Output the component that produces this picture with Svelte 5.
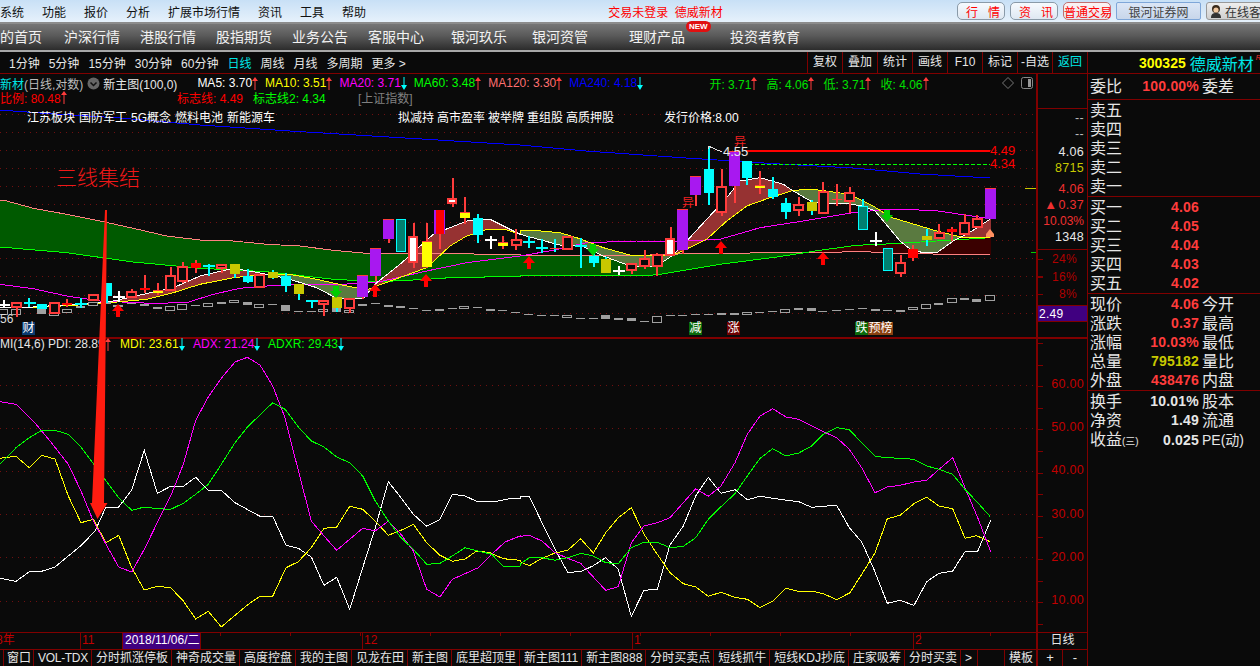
<script>
  // coordinates were read off zoomed crops, so each block has its own origin
  const up4 = (p) => p.map(([x, y]) => [x / 3, 170 + y / 3]);
  const up5 = (p) => p.map(([x, y]) => [520 + x / 3, 130 + y / 3]);
  const lo8 = (p) => p.map(([x, y]) => [x / 3, 340 + y / 3]);
  const lo9 = (p) => p.map(([x, y]) => [520 + x / 3, 340 + y / 3]);
  const pts = (p) => p.map(([x, y]) => `${x.toFixed(1)},${y.toFixed(1)}`).join(' ');

  const ma5 = [
    ...up4([[0,410],[100,408],[250,398],[340,390],[430,370],[520,350],[600,315],[700,292],[760,302],[860,322],[950,350],[1010,382],[1090,382],[1130,335],[1200,280],[1300,190],[1400,150],[1470,145],[1560,190]]),
    ...up5([[0,310],[130,345],[180,343],[250,375],[330,405],[410,405],[460,372],[500,330],[620,200],[660,150],[720,140],[790,160],[820,180],[880,215],[980,218],[1030,225],[1065,240],[1140,330],[1180,362],[1250,365],[1300,330],[1340,310],[1410,265]])
  ];
  const ma10 = [
    ...up4([[0,411],[100,410],[250,401],[340,394],[440,385],[520,365],[600,340],[700,320],[800,310],[880,312],[950,325],[1040,345],[1100,357],[1130,345],[1280,290],[1350,225],[1400,195],[1460,175],[1520,177],[1560,190]]),
    ...up5([[0,298],[40,298],[120,305],[170,320],[250,350],[330,372],[410,375],[470,368],[560,325],[620,270],[680,225],[750,200],[820,178],[880,175],[990,190],[1060,225],[1110,258],[1250,300],[1330,320],[1410,320]])
  ];
  const ma20 = [
    ...up4([[0,340],[100,353],[200,375],[300,390],[450,397],[560,395],[640,370],[720,352],[800,345],[880,340],[1000,342],[1140,332],[1280,300],[1400,275],[1560,255]]),
    ...up5([[100,358],[200,335],[350,330],[500,330],[600,325],[720,290],[850,270],[1000,245],[1100,235],[1240,238],[1410,263]])
  ];
  const ma60 = [
    ...up4([[0,228],[200,245],[400,273],[600,292],[800,302],[1000,325],[1140,332],[1280,325],[1350,320],[1560,316]]),
    ...up5([[0,435],[390,433],[420,430],[600,400],[770,378],[900,358],[1010,343],[1120,338],[1250,330],[1410,320]])
  ];
  const ma120 = [
    ...up4([[0,88],[20,90],[100,112],[200,130],[300,150],[400,172],[500,195],[600,207],[700,210],[800,220],[900,225],[1000,238],[1100,247],[1560,250]]),
    ...up5([[0,372],[390,372],[500,368],[1050,362],[1060,365],[1280,370],[1410,371]])
  ];
  const ma240 = [[0,109],[40,112],[120,117],[200,124],[290,130],[520,144],[586,150],[686,157],[780,163],[853,167],[920,173],[990,177]];

  function yAt(line, x) {
    for (let i = 1; i < line.length; i++) {
      if (x <= line[i][0]) {
        const [x0, y0] = line[i - 1], [x1, y1] = line[i];
        return x1 === x0 ? y1 : y0 + (y1 - y0) * (x - x0) / (x1 - x0);
      }
    }
    return line[line.length - 1][1];
  }

  // the area between two averages, one colour when a is above b and another when below
  function band(a, b, end) {
    let above = '', below = '';
    for (let x = 0; x <= end; x++) {
      const y1 = yAt(a, x), y2 = yAt(b, x);
      const seg = `M${x + 0.5} ${y1.toFixed(1)}V${y2.toFixed(1)}`;
      if (y1 < y2) above += seg; else below += seg;
    }
    return { above, below };
  }
  const fast = band(ma5, ma10, 990);
  const slow = band(ma120, ma60, 990);

  const cA = (c) => ({ x: c[0] / 3, wt: 170 + c[1] / 3, wb: 170 + c[2] / 3, bt: 170 + c[3] / 3, bb: 170 + c[4] / 3, k: c[5] });
  const cB = (c) => ({ x: 520 + c[0] / 3, wt: 130 + c[1] / 3, wb: 130 + c[2] / 3, bt: 130 + c[3] / 3, bb: 130 + c[4] / 3, k: c[5] });
  const bars = [
    ...[
      [10,388,412,399,403,'x'],[48,395,437,395,408,'r'],[86,382,408,394,398,'X'],[125,400,414,400,414,'c'],[163,395,425,397,425,'r'],
      [200,385,408,395,403,'f'],[240,382,410,396,400,'X'],[279,372,387,372,387,'r'],[320,336,395,336,376,'c'],[355,360,392,376,380,'x'],
      [394,355,380,362,377,'r'],[432,312,365,352,358,'f'],[471,335,372,356,366,'y'],[510,288,360,314,358,'r'],[547,273,335,288,330,'r'],
      [586,268,305,275,290,'f'],[625,280,315,283,286,'X'],[663,278,305,283,290,'r'],[703,280,320,280,308,'o'],[741,295,335,314,332,'c'],
      [778,313,350,313,347,'r'],[817,297,323,304,320,'o'],[857,305,362,315,345,'c'],[895,340,388,340,368,'o'],[934,388,412,388,391,'X'],
      [970,390,435,390,400,'r'],[1009,378,422,378,410,'o'],[1047,384,425,384,412,'r'],[1087,312,385,312,378,'p'],[1126,230,330,230,315,'p'],
      [1165,143,215,143,203,'p'],[1202,145,240,145,240,'t'],[1240,155,292,197,272,'w'],[1279,155,290,210,288,'y'],[1318,118,233,118,190,'q'],
      [1356,22,107,83,95,'w'],[1392,78,158,122,140,'y'],[1432,130,215,140,193,'c'],[1470,195,233,203,207,'x'],[1508,195,235,212,225,'y'],[1547,175,237,207,222,'r']
    ].map(cA),
    ...[
      [25,315,352,331,335,'X'],[64,325,365,348,352,'X'],[102,325,362,350,355,'z'],[141,317,355,317,355,'r'],[180,322,410,343,347,'X'],
      [220,365,407,375,395,'c'],[257,378,425,385,425,'o'],[295,405,433,418,422,'x'],[333,400,430,400,417,'r'],[372,358,413,385,405,'r'],
      [410,365,435,372,405,'r'],[450,288,375,323,372,'w'],[487,233,368,233,358,'p'],[526,135,225,135,192,'p'],[565,45,222,114,185,'c'],
      [603,113,255,167,242,'r'],[643,60,215,60,165,'p'],[680,90,162,90,142,'c'],[718,120,190,161,171,'y'],[757,138,205,174,198,'c'],
      [796,200,264,216,243,'c'],[834,198,255,221,236,'r'],[873,208,252,213,240,'o'],[908,153,248,183,247,'r'],[948,160,225,203,207,'y'],
      [987,168,245,187,210,'r'],[1027,205,297,225,295,'t'],[1065,303,345,328,332,'x'],[1102,352,420,352,418,'t'],[1140,372,437,397,425,'r'],
      [1178,342,390,353,381,'f'],[1218,295,345,315,327,'o'],[1256,278,325,305,320,'r'],[1295,288,330,295,302,'f'],[1332,248,313,275,310,'r'],
      [1370,252,290,265,287,'r'],[1410,170,263,170,263,'p']
    ].map(cB)
  ];

  const WICK = { x: '#fff', X: '#0ff', c: '#0ff', o: '#0ff', t: '#0ff', z: '#0ff' };
  const wickColor = (k) => WICK[k] || '#ff3c3c';

  const volA = [[10,415,430,1],[48,415,430,1],[125,412,428,0],[163,424,432,1],[200,415,423,1],[240,405,411,0],[279,393,404,1],[320,393,398,0],[355,403,407,1],[394,397,399,0],[432,398,404,0],[471,408,413,0],[510,406,418,1],[547,401,415,1],[586,402,404,0],[625,397,407,1],[663,393,398,0],[703,388,395,1],[741,393,401,0],[778,400,409,1],[817,400,402,0],[857,402,419,0],[895,420,423,0],[934,419,421,0],[970,415,422,1],[1009,411,422,0],[1047,418,424,1],[1087,400,404,0],[1126,397,400,0],[1165,403,407,0],[1202,406,410,0],[1240,411,413,0],[1279,417,419,0],[1318,414,419,0],[1356,412,413,0],[1392,406,412,1],[1432,407,412,0],[1470,414,419,0],[1508,417,419,0],[1547,423,427,0]];
  const volB = [[25,549,552,0],[64,553,556,0],[102,552,555,0],[141,553,559,1],[180,560,562,0],[220,560,562,0],[257,553,564,0],[295,561,566,0],[333,561,570,0],[372,570,572,0],[410,556,574,1],[450,552,554,0],[487,552,554,0],[526,548,551,0],[565,548,551,0],[603,546,551,0],[643,546,551,0],[680,544,551,1],[718,544,545,0],[757,540,543,0],[796,534,544,1],[834,532,536,0],[873,532,539,0],[908,540,542,0],[948,538,541,0],[987,534,537,0],[1027,531,534,0],[1065,534,539,0],[1102,537,540,0],[1140,537,542,0],[1178,529,536,1],[1218,520,532,1],[1256,516,521,0],[1295,502,514,1],[1332,502,506,0],[1370,504,512,0],[1410,493,508,1]];
  const volume = [
    ...volA.map((v) => ({ x: v[0] / 3, t: 170 + v[1] / 3, b: 170 + v[2] / 3, hollow: v[3] })),
    ...volB.map((v) => ({ x: 520 + v[0] / 3, t: 130 + v[1] / 3, b: 130 + v[2] / 3, hollow: v[3] }))
  ];

  const upArrows = [[118,303],[375,283],[426,273],[529,255],[721,240],[823,251]];
  const downArrows = [[336,286],[593,244],[887,210]];

  const lower = [
    { color: '#fff', line: [
      ...lo8([[0,712],[48,721],[90,691],[125,691],[165,678],[205,645],[245,612],[285,570],[318,498],[356,498],[395,447],[433,328],[472,457],[512,436],[550,436],[587,409],[625,448],[664,448],[705,485],[745,507],[780,526],[818,526],[858,613],[895,622],[934,648],[972,733],[1010,709],[1049,805],[1088,680],[1126,560],[1165,422],[1203,470],[1240,520],[1280,556],[1320,535],[1357,460],[1395,465],[1430,481],[1490,481],[1530,473],[1560,472]]),
      ...lo9([[0,468],[28,466],[66,545],[105,625],[143,694],[182,692],[218,675],[257,650],[295,685],[334,826],[372,748],[412,745],[450,612],[490,555],[527,465],[565,409],[603,457],[645,446],[682,476],[720,466],[760,472],[800,478],[836,482],[875,499],[910,496],[950,493],[988,560],[1025,603],[1060,680],[1102,787],[1140,778],[1182,793],[1220,722],[1257,697],[1298,690],[1335,632],[1373,631],[1412,537]])
    ] },
    { color: '#ff0', line: [
      ...lo8([[0,352],[48,346],[88,380],[125,343],[165,354],[205,465],[243,545],[280,535],[318,605],[356,583],[395,680],[433,747],[472,736],[512,740],[550,780],[587,834],[625,811],[664,858],[705,823],[745,790],[780,766],[818,766],[858,680],[895,662],[934,620],[972,562],[1010,558],[1049,496],[1088,505],[1126,540],[1165,583],[1203,568],[1240,550],[1280,605],[1320,643],[1357,661],[1395,654],[1430,630],[1470,635],[1510,653],[1560,658]]),
      ...lo9([[0,662],[28,674],[66,652],[105,636],[143,628],[182,593],[220,636],[257,575],[295,530],[334,500],[372,580],[412,640],[450,695],[490,728],[527,738],[565,766],[603,754],[645,769],[682,775],[720,800],[760,780],[798,742],[836,751],[880,751],[910,758],[950,776],[990,755],[1025,700],[1065,636],[1102,533],[1140,523],[1182,488],[1220,469],[1257,495],[1298,503],[1335,592],[1370,584],[1410,602]])
    ] },
    { color: '#f0f', line: [
      ...lo8([[0,182],[48,190],[100,240],[150,300],[205,370],[243,450],[280,540],[318,610],[356,678],[395,693],[433,625],[472,545],[512,465],[550,370],[587,238],[625,168],[664,112],[705,63],[742,49],[780,72],[818,135],[855,230],[880,330],[934,540],[972,585],[1010,628],[1049,595],[1088,562],[1126,570],[1165,540],[1203,580],[1240,630],[1280,745],[1320,768],[1357,715],[1395,698],[1435,680],[1475,640],[1515,603],[1560,585]]),
      ...lo9([[0,586],[28,583],[66,600],[105,635],[143,652],[182,667],[220,708],[257,748],[295,737],[334,605],[372,555],[412,545],[450,530],[490,485],[527,443],[565,466],[603,435],[645,365],[682,280],[720,225],[758,203],[798,228],[836,235],[875,255],[910,272],[950,290],[988,325],[1025,380],[1065,455],[1102,438],[1140,433],[1182,423],[1220,418],[1257,385],[1298,350],[1335,440],[1373,530],[1412,632]])
    ] },
    { color: '#0f0', line: [
      ...lo8([[0,370],[48,320],[88,290],[125,268],[165,268],[205,280],[243,318],[285,375],[318,420],[356,470],[395,508],[433,498],[472,503],[512,505],[550,487],[587,460],[625,430],[664,370],[705,305],[745,255],[780,222],[818,185],[855,205],[895,258],[934,300],[972,318],[1010,348],[1049,365],[1088,405],[1126,480],[1165,540],[1203,590],[1240,625],[1280,670],[1320,667],[1357,645],[1395,620],[1435,630],[1475,640],[1510,676],[1560,675]]),
      ...lo9([[0,670],[28,650],[66,650],[105,658],[143,650],[182,637],[220,645],[257,665],[295,668],[334,620],[372,604],[412,604],[450,620],[490,616],[527,590],[565,535],[603,497],[645,458],[682,405],[720,352],[758,323],[798,345],[836,336],[875,315],[910,280],[950,260],[988,266],[1025,305],[1065,346],[1102,350],[1140,352],[1182,355],[1220,375],[1257,385],[1298,400],[1335,445],[1373,485],[1410,526]])
    ] }
  ];

  const upperGrid = Array.from({ length: 12 }, (_, i) => 113 + i * 18.1);
  const lowerGrid = [384, 427, 470, 513, 556, 600];

  const menu = ['系统', '功能', '报价', '分析', '扩展市场行情', '资讯', '工具', '帮助'];
  const periods = ['1分钟', '5分钟', '15分钟', '30分钟', '60分钟', '日线', '周线', '月线', '多周期', '更多 >'];
  const actions = ['复权', '叠加', '统计', '画线', 'F10', '标记', '-自选', '返回'];
  const mas = [
    ['MA5: 3.70', '#fff', 'up'], ['MA10: 3.51', '#ff0', 'up'], ['MA20: 3.71', '#f0f', 'down'],
    ['MA60: 3.48', '#0f0', 'up'], ['MA120: 3.30', '#ff7070', 'up'], ['MA240: 4.18', '#0000ff', 'down']
  ];
  const ohlc = ['开: 3.71', '高: 4.06', '低: 3.71', '收: 4.06'];
  const tabs = ['窗口', 'VOL-TDX', '分时抓涨停板', '神奇成交量', '高度控盘', '我的主图', '见龙在田', '新主图', '底里超顶里', '新主图111', '新主图888', '分时买卖点', '短线抓牛', '短线KDJ抄底', '庄家吸筹', '分时买卖', '>'];
  const ticks = [
    { w: 80, label: '8年' }, { w: 42, label: '11' }, { w: 78, label: '2018/11/06/二', on: true },
    { w: 162, label: '' }, { w: 270, label: '12' }, { w: 281, label: '1' }, { w: 123, label: '2' }
  ];

  const sells = ['卖五', '卖四', '卖三', '卖二', '卖一'];
  const buys = [['买一', '4.06'], ['买二', '4.05'], ['买三', '4.04'], ['买四', '4.03'], ['买五', '4.02']];
  const quotes = [
    ['现价', '4.06', 'red', '今开'], ['涨跌', '0.37', 'red', '最高'], ['涨幅', '10.03%', 'red', '最低'],
    ['总量', '795182', 'olive', '量比'], ['外盘', '438476', 'red', '内盘']
  ];
</script>

{#snippet arrow(dir)}
  <svg class="tick-arrow" width="6" height="13" viewBox="0 0 6 13">
    {#if dir === 'up'}
      <path d="M3 0L6 4H3.500V13H2.500V4H0z" fill="#ff3c3c" />
    {:else}
      <path d="M3 13L0 8H2.500V0H3.500V8H6z" fill="#0ff" />
    {/if}
  </svg>
{/snippet}

<div class="app">
  <header class="menu">
    {#each menu as item}<span>{item}</span>{/each}
    <span class="status">交易未登录&nbsp;&nbsp;德威新材</span>
    <div class="quick">
      <button class="pill spaced">行情</button>
      <button class="pill spaced">资讯</button>
      <button class="pill trade">普通交易</button>
      <button class="site">银河证券网</button>
      <button class="service">
        <svg width="14" height="14" viewBox="0 0 14 14">
          <circle cx="7" cy="5" r="4" fill="#3a2a1a" /><circle cx="7" cy="6" r="2.6" fill="#f0c8a0" />
          <path d="M2 14c0-4 2-5 5-5s5 1 5 5z" fill="#333" />
        </svg>
        在线客服
      </button>
    </div>
  </header>

  <nav class="nav">
    <span class="cut">我的首页</span>
    <span>沪深行情</span>
    <span>港股行情</span>
    <span>股指期货</span>
    <span>业务公告</span>
    <span>客服中心</span>
    <span class="wide">银河玖乐</span>
    <span class="wide next">银河资管</span>
    <span class="far">理财产品<b class="new">NEW</b></span>
    <span class="farther">投资者教育</span>
  </nav>

  <div class="body">
    <section class="left">
      <div class="toolbar">
        <div class="periods">
          {#each periods as p}<span class:active={p === '日线'}>{p}</span>{/each}
        </div>
        <div class="actions">
          {#each actions as a}<span class:active={a === '返回'}>{a}</span>{/each}
        </div>
      </div>

      <div class="main">
        <div class="canvas">
          <svg class="plot" width="1036" height="558" viewBox="0 73 1036 558" shape-rendering="crispEdges">
            {#each upperGrid as y}<line x1="0" x2="1036" y1={y} y2={y} class="grid" />{/each}
            {#each lowerGrid as y}<line x1="0" x2="1036" y1={y} y2={y} class="grid" />{/each}

            <path d={slow.above} stroke="#005a00" />
            <path d={slow.below} stroke="#3a0000" />
            <path d={fast.above} stroke="#963232" />
            <path d={fast.below} stroke="#5a7a40" />

            <polyline points={pts(ma240)} class="ln" stroke="#0000ff" />
            <polyline points={pts(ma120)} class="ln" stroke="#ff8080" />
            <polyline points={pts(ma60)} class="ln" stroke="#00ff00" />
            <polyline points={pts(ma20)} class="ln" stroke="#ff00ff" />
            <polyline points={pts(ma10)} class="ln" stroke="#ffff00" />
            <polyline points={pts(ma5)} class="ln" stroke="#ffffff" />

            <line x1="746" x2="990" y1="150" y2="150" stroke="#f00" stroke-width="2" />
            <line x1="743" x2="990" y1="163.500" y2="163.500" stroke="#0f0" stroke-dasharray="4 2" />
            <line x1="1025" x2="1036" y1="187.500" y2="187.500" stroke="#c8c800" />
            <line x1="1031" x2="1036" y1="251.500" y2="251.500" stroke="#0c0" />

            {#each volume as v}
              {#if v.hollow}
                <rect x={v.x - 4.500} y={v.t} width="9" height={v.b - v.t} fill="#0a0a0a" stroke="#a0a0a0" />
              {:else}
                <rect x={v.x - 4.500} y={v.t} width="9" height={Math.max(1, v.b - v.t)} fill="#a0a0a0" />
              {/if}
            {/each}

            {#each bars as c}
              <rect x={c.x - 0.500} y={c.wt} width="2" height={c.wb - c.wt} fill={wickColor(c.k)} />
              {#if c.k === 'r'}
                <rect x={c.x - 4} y={c.bt} width="9" height={c.bb - c.bt} fill="#0a0a0a" stroke="#ff3c3c" stroke-width="2" />
              {:else if c.k === 'f'}
                <rect x={c.x - 4.500} y={c.bt} width="10" height={c.bb - c.bt} fill="#f00" />
              {:else if c.k === 'c'}
                <rect x={c.x - 4.500} y={c.bt} width="10" height={c.bb - c.bt} fill="#0ff" />
              {:else if c.k === 'o'}
                <rect x={c.x - 4.500} y={c.bt} width="10" height={c.bb - c.bt} fill="#c8c800" />
              {:else if c.k === 'y' || c.k === 'z'}
                <rect x={c.x - 4.500} y={c.bt} width="10" height={c.bb - c.bt} fill="#ff0" />
                <rect x={c.x - 4.500} y={c.bt} width="10" height="1" fill="#ff3c3c" />
              {:else if c.k === 'w'}
                <rect x={c.x - 4} y={c.bt} width="8" height={c.bb - c.bt} fill="#fff" stroke="#ff3c3c" stroke-width="2" />
              {:else if c.k === 'p'}
                <rect x={c.x - 5} y={c.bt} width="11" height={c.bb - c.bt} fill="#a818f0" />
                <rect x={c.x - 5} y={c.bt} width="11" height="1" fill="#ff3c3c" />
              {:else if c.k === 'q'}
                <rect x={c.x - 5} y={c.bt} width="11" height={c.bb - c.bt} fill="#a818f0" />
                <rect x={c.x - 3} y={c.bt} width="8" height={c.bb - c.bt} fill="#f00" />
              {:else if c.k === 't'}
                <rect x={c.x - 4} y={c.bt} width="9" height={c.bb - c.bt} fill="#008070" stroke="#0ff" />
              {:else}
                <rect x={c.x - 5} y={c.bt} width="12" height="2" fill={wickColor(c.k)} />
              {/if}
            {/each}

            {#each upArrows as [x, y]}
              <path d="M{x} {y}l6 7h-4v6h-4v-6h-4z" fill="#f00" shape-rendering="auto" />
            {/each}
            {#each downArrows as [x, y]}
              <path d="M{x} {y + 11}l6 -7h-3v-5h-6v5h-3z" fill="#0c0" shape-rendering="auto" />
            {/each}
            <path d="M990 228l4 5h-8z" fill="#ff9060" shape-rendering="auto" />
            <path d="M990 233h-4v3h8v-3z" fill="#ff9060" />

            <path d="M708 148v-3h3M708 148v-3l14 6" fill="none" stroke="#ddd" />
            <text x="723" y="155" class="price-white">4.55</text>
            <text x="990" y="154" class="price-red">4.49</text>
            <text x="990" y="167" class="price-red">4.34</text>
            <text x="682" y="206" class="sig">异</text>
            <text x="734" y="145" class="sig">异</text>
            <text x="56" y="184" class="note">三线集结</text>
            <text x="0" y="322" class="vol-tag">56</text>

            <line x1="0" x2="1036" y1="336.500" y2="336.500" stroke="#800000" stroke-width="2" />

            {#each lower as s}
              <polyline points={pts(s.line)} class="ln" stroke={s.color} />
            {/each}
          </svg>

          <div class="legend">
            <div class="row">
              <span class="title"><i>新材</i>(日线,对数)</span>
              <svg class="chev" width="13" height="13" viewBox="0 0 13 13">
                <circle cx="6.500" cy="6.500" r="6" fill="#666" /><path d="M3.500 5.500l3 3 3-3" fill="none" stroke="#111" stroke-width="1.500" />
              </svg>
              <span class="tpl">新主图(100,0)</span>
              <div class="mas">
                {#each mas as [text, color, dir]}
                  <span class="val" style="color: {color}">{text}{@render arrow(dir)}</span>
                {/each}
              </div>
              <div class="ohlc">
                {#each ohlc as o}<span class="val">{o}{@render arrow('up')}</span>{/each}
              </div>
              <div class="tools">
                <svg width="12" height="12" viewBox="0 0 12 12"><path d="M6 .5L11.500 6 6 11.500.5 6z" fill="none" stroke="#777" /></svg>
                <svg width="12" height="12" viewBox="0 0 12 12"><rect x=".5" y=".5" width="11" height="11" rx="2" fill="none" stroke="#888" /><rect x="7" y="2" width="3" height="8" fill="#999" /></svg>
              </div>
            </div>
            <div class="row second">
              <span class="val ratio">比例: 80.48{@render arrow('up')}</span>
              <span class="val sign">标志线: 4.49</span>
              <span class="val sign2">标志线2: 4.34</span>
              <span class="index">[上证指数]</span>
            </div>
            <div class="row tags">
              <div class="group first"><span>江苏板块</span><span>国防军工</span><span>5G概念</span><span>燃料电池</span><span>新能源车</span></div>
              <div class="group mid"><span>拟减持</span><span>高市盈率</span><span>被举牌</span><span>重组股</span><span>高质押股</span></div>
              <span class="issue">发行价格:8.00</span>
            </div>
            <div class="events">
              <span class="ev fin">财</span>
              <span class="ev cut1">减</span>
              <span class="ev rise">涨</span>
              <span class="ev fall">跌</span>
              <span class="ev rank">预榜</span>
            </div>
            <div class="row adx">
              <span class="val mi">MI(14,6)</span>
              <span class="val">PDI: 28.89{@render arrow('up')}</span>
              <span class="val mdi">MDI: 23.61{@render arrow('down')}</span>
              <span class="val adx-v">ADX: 21.24{@render arrow('down')}</span>
              <span class="val adxr">ADXR: 29.43{@render arrow('down')}</span>
            </div>
          </div>

          <svg class="big-arrow" width="120" height="320" viewBox="0 205 120 320">
            <path d="M105 209L107 209 104 502 107.500 502 97.500 518 90 502 92 502z" fill="#ff1c10" />
          </svg>
        </div>

        <aside class="axis">
          <div class="axis-head"></div>
          <div class="axis-upper">
            <span class="gray">--</span>
            <span class="gray">--</span>
            <span class="w lift">4.06</span>
            <span class="yl lift">8715</span>
            <span class="rd gap">4.06</span>
            <span class="rd"><em>▲</em>0.37</span>
            <span class="rd small">10.03%</span>
            <span class="w">1348</span>
          </div>
          <div class="axis-pct">
            <span>24%</span><span>16%</span><span>8%</span>
          </div>
          <div class="cost">2.49</div>
          <div class="axis-lower">
            {#each ['60.00', '50.00', '40.00', '30.00', '20.00', '10.00'] as v}<span>{v}</span>{/each}
          </div>
        </aside>
      </div>

      <div class="timeline">
        <div class="dates">
          {#each ticks as t}
            <span class="seg" class:on={t.on} style="width: {t.w}px">{t.label}</span>
          {/each}
        </div>
        <div class="period-cell">日线</div>
      </div>

      <div class="tabs">
        <div class="tab-list">
          {#each tabs as t}<span>{t}</span>{/each}
          <span class="tpl-tab">模板</span>
        </div>
        <div class="zoom"><span>+</span><span>-</span></div>
      </div>
    </section>

    <aside class="panel">
      <div class="stock"><b>300325</b><span>德威新材</span><i>R</i></div>
      <div class="line ratio-row">
        <span class="lb">委比</span><span class="num red">100.00%</span><span class="lb2">委差</span>
      </div>
      <div class="block">
        {#each sells as s}<div class="line"><span class="lb">{s}</span></div>{/each}
      </div>
      <div class="block">
        {#each buys as [l, v]}<div class="line"><span class="lb">{l}</span><span class="num red">{v}</span></div>{/each}
      </div>
      <div class="block">
        {#each quotes as [l, v, c, r]}
          <div class="line"><span class="lb">{l}</span><span class="num {c}">{v}</span><span class="lb2">{r}</span></div>
        {/each}
      </div>
      <div class="block last">
        <div class="line"><span class="lb">换手</span><span class="num">10.01%</span><span class="lb2">股本</span></div>
        <div class="line"><span class="lb">净资</span><span class="num">1.49</span><span class="lb2">流通</span></div>
        <div class="line"><span class="lb">收益<small>(三)</small></span><span class="num">0.025</span><span class="lb2 pe">PE(动)</span></div>
      </div>
    </aside>
  </div>
</div>

<style>
  :global(body) {
    margin: 0;
    background: #0a0a0a;
  }

  .app {
    width: 1260px;
    height: 666px;
    overflow: hidden;
    display: flex;
    flex-direction: column;
    background: #0a0a0a;
    color: #e6e6e6;
    font-family: "Liberation Sans", "Noto Sans CJK SC", sans-serif;
    font-size: 12px;
    white-space: nowrap;
  }

  .menu {
    height: 22px;
    flex: none;
    display: flex;
    align-items: center;
    gap: 18px;
    color: #111;
    background: linear-gradient(#c8e0f6, #e6f1fb);
    border-bottom: 2px solid #8c8c8c;
    box-sizing: content-box;
  }

  .status {
    color: #f00;
    margin-left: 224px;
  }

  .quick {
    margin-left: auto;
    display: flex;
    gap: 5px;
    margin-right: -14px;
  }

  .quick button {
    height: 18px;
    padding: 0;
    font: inherit;
    box-sizing: border-box;
    white-space: nowrap;
  }

  .pill {
    width: 48px;
    color: #f00;
    background: linear-gradient(#f6fafe, #dfe8f2);
    border: 1px solid #8a9aa8;
    border-radius: 5px;
  }

  .spaced {
    letter-spacing: 10px;
    padding-left: 8px !important;
  }

  .trade {
    background: linear-gradient(#fdf2f2, #e4e8f0);
    border-color: #c07070;
  }

  .site {
    width: 85px;
    color: #444;
    background: linear-gradient(#dbe6f6, #c8d6ea);
    border: 1px solid #7ea6d8;
    border-radius: 2px;
  }

  .service {
    width: 68px;
    color: #333;
    background: linear-gradient(#eee, #cfcfcf);
    border: 1px solid #999;
    border-radius: 3px;
    display: flex;
    align-items: center;
    gap: 2px;
    padding-left: 2px !important;
  }

  .nav {
    height: 26px;
    flex: none;
    display: flex;
    align-items: center;
    gap: 20px;
    padding-bottom: 2px;
    box-sizing: border-box;
    font-size: 14px;
    color: #f2f2f2;
    background: linear-gradient(#767676, #5a5a5a 45%, #2c2c2c);
    border-bottom: 2px solid #a8a8a8;
    height: 28px;
  }

  .cut {
    margin-left: -14px;
    margin-right: 2px;
  }

  .wide {
    margin-left: 7px;
  }

  .next {
    margin-left: 5px;
  }

  .far {
    position: relative;
    margin-left: 21px;
  }

  .farther {
    margin-left: 25px;
  }

  .new {
    position: absolute;
    left: 57px;
    top: -5px;
    padding: 0 3px;
    height: 11px;
    line-height: 11px;
    font-size: 8px;
    color: #fff;
    background: #e01010;
    border-radius: 6px;
  }

  .body {
    flex: 1;
    min-height: 0;
    display: flex;
  }

  .left {
    width: 1088px;
    flex: none;
    display: flex;
    flex-direction: column;
    border-right: 1px solid #800000;
    box-sizing: border-box;
  }

  .toolbar {
    height: 22px;
    flex: none;
    display: flex;
    justify-content: space-between;
    border-bottom: 1px solid #800000;
    box-sizing: border-box;
  }

  .periods {
    display: flex;
    align-items: center;
    gap: 9px;
    padding-left: 9px;
  }

  .active {
    color: #00e6e6;
  }

  .actions {
    display: flex;
  }

  .actions span {
    width: 35px;
    line-height: 20px;
    text-align: center;
    border-left: 1px solid #800000;
    box-sizing: border-box;
  }

  .main {
    height: 558px;
    flex: none;
    display: flex;
  }

  .canvas {
    position: relative;
    width: 1036px;
    flex: none;
    overflow: hidden;
  }

  .plot {
    display: block;
  }

  .plot path:not([fill]) {
    fill: none;
    stroke-width: 1;
  }

  .grid {
    stroke: #701010;
    stroke-dasharray: 1 5;
  }

  .ln {
    fill: none;
    stroke-width: 1;
  }

  .price-white {
    fill: #e8e8e8;
    font-size: 13px;
  }

  .price-red {
    fill: #f00;
    font-size: 13px;
  }

  .sig {
    fill: #f02020;
    font-size: 12px;
  }

  .note {
    fill: #f01818;
    font-size: 21px;
    font-weight: 300;
  }

  .vol-tag {
    fill: #ddd;
    font-size: 12px;
  }

  .legend {
    position: absolute;
    inset: 2px 0 0;
    display: flex;
    flex-direction: column;
  }

  .row {
    display: flex;
    align-items: center;
    height: 14px;
  }

  .val {
    display: inline-flex;
    align-items: center;
    color: #e6e6e6;
  }

  .title {
    color: #bbb;
  }

  .title i {
    font-style: normal;
    color: #00e6e6;
  }

  .chev {
    margin: 0 3px 0 4px;
  }

  .mas {
    display: flex;
    gap: 7px;
    width: 512px;
    margin-left: 20px;
  }

  .ohlc {
    display: flex;
    gap: 9px;
  }

  .ohlc .val {
    color: #00e000;
  }

  .tools {
    margin-left: auto;
    display: flex;
    gap: 7px;
    padding-right: 3px;
  }

  .second .ratio {
    color: #f00;
    width: 177px;
  }

  .second .sign {
    color: #f00;
    width: 76px;
  }

  .second .sign2 {
    color: #0f0;
    width: 105px;
  }

  .index {
    color: #808080;
  }

  .tags {
    margin-top: 5px;
    color: #fff;
  }

  .group {
    display: flex;
    gap: 3px;
  }

  .first {
    width: 371px;
    margin-left: 27px;
    gap: 4px;
  }

  .mid {
    width: 266px;
  }

  .events {
    display: flex;
    margin-top: 199px;
    height: 13px;
  }

  .ev {
    width: 13px;
    text-align: center;
    line-height: 13px;
    color: #fff;
    font-size: 12px;
  }

  .fin {
    background: #0a3a70;
    margin-left: 22px;
  }

  .cut1 {
    background: #0a6a0a;
    margin-left: 654px;
  }

  .rise {
    background: #700000;
    margin-left: 25px;
  }

  .fall {
    background: #0a6a0a;
    margin-left: 115px;
  }

  .rank {
    width: 25px;
    background: #8a4010;
    white-space: nowrap;
  }

  .adx {
    margin-top: 2px;
  }

  .mi {
    width: 48px;
  }

  .adx .val:nth-child(2) {
    width: 72px;
  }

  .mdi {
    color: #ff0;
    width: 73px;
  }

  .adx-v {
    color: #f0f;
    width: 75px;
  }

  .adxr {
    color: #0f0;
  }

  .big-arrow {
    position: absolute;
    left: 0;
    top: 132px;
  }

  .axis {
    width: 51px;
    flex: none;
    display: flex;
    flex-direction: column;
    border-left: 2px solid #800000;
    box-sizing: border-box;
    font-size: 12px;
    letter-spacing: 0.3px;
  }

  .axis span {
    display: block;
    text-align: right;
    padding-right: 3px;
  }

  .axis-head {
    height: 34px;
    flex: none;
    border-bottom: 1px solid #800000;
  }

  .axis-upper {
    height: 141px;
    flex: none;
    border-bottom: 1px solid #800000;
    box-sizing: border-box;
    padding-top: 1px;
  }

  .axis-upper span {
    height: 16px;
    line-height: 16px;
    font-size: 12.500px;
  }

  .axis-upper .small {
    font-size: 12px;
    letter-spacing: 0;
  }

  .gray {
    color: #bbb;
  }

  .w {
    color: #e8e8e8;
  }

  .yl {
    color: #c8c800;
  }

  .rd {
    color: #f03030;
  }

  .rd em {
    font-style: normal;
    font-size: 13px;
    margin-right: 1px;
  }

  .lift {
    position: relative;
    top: 2px;
  }

  .gap {
    margin-top: 7px;
  }

  .axis-pct {
    height: 55px;
    flex: none;
    color: #b00000;
    background: repeating-linear-gradient(#800000 0 1px, transparent 1px 17.500px) 0 9px / 5px 100% no-repeat;
  }

  .axis-pct span {
    height: 17.500px;
    line-height: 18px;
    text-align: right;
    padding-right: 10px;
  }

  .cost {
    height: 17px;
    flex: none;
    line-height: 16px;
    padding-left: 1px;
    color: #fff;
    background: #400080;
    border-top: 1px solid #800000;
    border-bottom: 1px solid #800000;
    box-sizing: border-box;
  }

  .axis-lower {
    flex: 1;
    margin-top: 15px;
    padding-top: 37px;
    border-top: 2px solid #800000;
    color: #c00000;
    background: repeating-linear-gradient(#800000 0 1px, transparent 1px 21.600px) 0 4px / 5px 100% no-repeat;
  }

  .axis-lower span {
    height: 43.200px;
    line-height: 16px;
    font-size: 12.500px;
  }

  .timeline {
    height: 17px;
    flex: none;
    display: flex;
    border-top: 1px solid #800000;
    box-sizing: border-box;
  }

  .dates {
    width: 1036px;
    flex: none;
    display: flex;
    color: #c00000;
    overflow: hidden;
    background: repeating-linear-gradient(to right, #800000 0 1px, transparent 1px 70px) 10px 0 / 100% 3px no-repeat;
  }

  .seg {
    flex: none;
    line-height: 15px;
    padding-left: 1px;
    border-left: 1px solid #800000;
    box-sizing: border-box;
  }

  .seg:first-child {
    border-left: 0;
    text-indent: -5px;
  }

  .seg.on {
    color: #fff;
    background: #400080;
    padding-left: 2px;
  }

  .period-cell {
    flex: 1;
    text-align: center;
    line-height: 15px;
    border-left: 2px solid #800000;
  }

  .tabs {
    flex: 1;
    display: flex;
    border-top: 1px solid #800000;
    border-bottom: 1px solid #800000;
  }

  .tab-list {
    width: 1036px;
    flex: none;
    display: flex;
    overflow: hidden;
    padding-left: 3px;
    box-sizing: border-box;
  }

  .tab-list span {
    padding: 0 3px 0 4px;
    line-height: 16px;
    border-left: 1px solid #800000;
  }

  .tab-list span:first-child {
    padding: 0 2px 0 3px;
  }

  .tab-list span:nth-child(2) {
    letter-spacing: -0.3px;
  }

  .tab-list .tpl-tab {
    margin-left: auto;
  }

  .tab-list span:nth-last-child(2) {
    border-right: 1px solid #800000;
    padding-right: 5px;
  }

  .zoom {
    flex: 1;
    display: flex;
    border-left: 2px solid #800000;
  }

  .zoom span {
    flex: 1;
    text-align: center;
    line-height: 15px;
    font-size: 13px;
  }

  .zoom span + span {
    border-left: 1px solid #800000;
  }

  .panel {
    flex: 1;
    min-width: 0;
  }

  .stock {
    height: 22px;
    display: flex;
    align-items: center;
    padding-left: 51px;
    gap: 4px;
    border-bottom: 1px solid #800000;
    box-sizing: border-box;
    overflow: hidden;
  }

  .stock b {
    color: #ff0;
    font-size: 14px;
  }

  .stock span {
    color: #00e6e6;
    font-size: 16px;
  }

  .stock i {
    color: #f03030;
    font-size: 7px;
    margin-top: -10px;
    margin-left: -2px;
  }

  .line {
    height: 19px;
    display: grid;
    grid-template-columns: 50px 59px 1fr;
    align-items: center;
    font-size: 16px;
    line-height: 19px;
    padding-left: 2px;
  }

  .ratio-row {
    height: 26px;
    border-bottom: 1px solid #800000;
    box-sizing: border-box;
  }

  .block {
    padding-top: 1px;
    border-bottom: 1px solid #800000;
  }

  .block.last {
    border-bottom: 0;
  }

  .lb {
    grid-column: 1;
    color: #e6e6e6;
  }

  .lb small {
    font-size: 10px;
  }

  .lb2 {
    grid-column: 3;
    margin-left: 3px;
    color: #e6e6e6;
  }

  .pe {
    font-size: 14px;
  }

  .num {
    grid-column: 2;
    text-align: right;
    font-size: 14px;
    font-weight: 700;
    letter-spacing: 0.2px;
    color: #e6e6e6;
  }

  .red {
    color: #ff3c3c;
  }

  .olive {
    color: #c8c800;
  }
</style>
